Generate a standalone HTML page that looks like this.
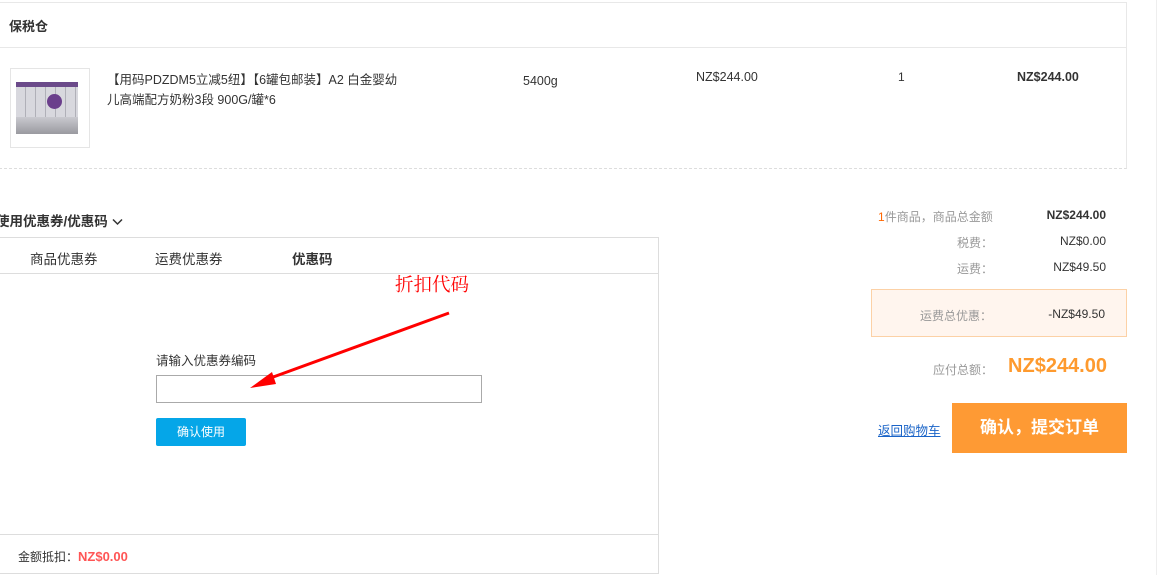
<!DOCTYPE html>
<html><head><meta charset="utf-8"><style>
*{margin:0;padding:0;box-sizing:border-box}
body{width:1158px;height:575px;background:#fff;position:relative;overflow:hidden;font-family:"Liberation Sans","Noto Sans CJK SC",sans-serif;color:#333;font-size:12px}
.a{position:absolute;white-space:nowrap}
</style></head><body>
<div class="a" style="left:-1px;top:2px;width:1128px;height:167px;border:1px solid #e8e8e8;border-bottom:1px dashed #ddd"></div>
<div class="a" style="left:0;top:47px;width:1126px;height:1px;background:#e8e8e8"></div>
<div class="a" style="left:1156px;top:0;width:1px;height:575px;background:#eee"></div>
<div class="a" style="left:9px;top:16px;font-size:13px;font-weight:bold;color:#333">保税仓</div>
<div class="a" style="left:10px;top:68px;width:80px;height:80px;border:1px solid #e5e5e5;background:#fff">
<div style="position:absolute;left:5px;top:13px;width:62px;height:52px;background:repeating-linear-gradient(90deg,#d8d8de 0 9px,#b0b0b8 9px 10px),#ddd"></div>
<div style="position:absolute;left:5px;top:13px;width:62px;height:5px;background:#6b4a8a"></div>
<div style="position:absolute;left:5px;top:48px;width:62px;height:17px;background:linear-gradient(#c9c9cf,#9a9aa0)"></div>
<div style="position:absolute;left:36px;top:25px;width:15px;height:15px;border-radius:50%;background:#6b3f8c"></div>
</div>
<div class="a" style="left:107px;top:70px;line-height:20px;font-size:12.5px">【用码PDZDM5立减5纽】【6罐包邮装】A2 白金婴幼<br>儿高端配方奶粉3段 900G/罐*6</div>
<div class="a" style="left:523px;top:74px;font-size:12.5px">5400g</div>
<div class="a" style="left:696px;top:70px;font-size:12.5px">NZ$244.00</div>
<div class="a" style="left:898px;top:70px">1</div>
<div class="a" style="left:1017px;top:70px;font-weight:bold;font-size:12.5px">NZ$244.00</div>

<div class="a" style="left:-4px;top:210px;font-size:13.5px;font-weight:bold">使用优惠券/优惠码 <svg width="11" height="8" viewBox="0 0 11 8"><path d="M1 1.5l4.5 4.5 4.5-4.5" fill="none" stroke="#333" stroke-width="1.5"/></svg></div>
<div class="a" style="left:-1px;top:237px;width:660px;height:337px;border:1px solid #ddd"></div>
<div class="a" style="left:0;top:273px;width:658px;height:1px;background:#ddd"></div>
<div class="a" style="left:0;top:534px;width:658px;height:1px;background:#ddd"></div>
<div class="a" style="left:30px;top:248px;font-size:13.5px">商品优惠券</div>
<div class="a" style="left:155px;top:248px;font-size:13.5px">运费优惠券</div>
<div class="a" style="left:292px;top:248px;font-size:13.5px;font-weight:bold">优惠码</div>
<div class="a" style="left:395px;top:271px;font-size:18.5px;color:#f00;font-family:'Liberation Serif','Noto Serif CJK SC',serif">折扣代码</div>
<div class="a" style="left:156px;top:350px;font-size:12.5px">请输入优惠券编码</div>
<div class="a" style="left:156px;top:375px;width:326px;height:28px;border:1px solid #aaa"></div>
<div class="a" style="left:156px;top:418px;width:90px;height:28px;background:#05a6e8;border-radius:2px;color:#fff;text-align:center;line-height:28px">确认使用</div>
<svg class="a" style="left:0;top:0" width="660" height="575"><line x1="449" y1="313" x2="265" y2="380" stroke="#f00" stroke-width="3"/><path d="M250 388l22-16 4 12z" fill="#f00"/></svg>
<div class="a" style="left:18px;top:548px">金额抵扣：<b style="color:#f55;font-size:13px">NZ$0.00</b></div>

<div class="a" style="left:878px;top:208px;color:#999"><span style="color:#f60">1</span>件商品，商品总金额</div>
<div class="a" style="right:52px;top:208px;font-weight:bold;color:#333">NZ$244.00</div>
<div class="a" style="left:957px;top:234px;color:#999">税费：</div>
<div class="a" style="right:52px;top:234px">NZ$0.00</div>
<div class="a" style="left:957px;top:260px;color:#999">运费：</div>
<div class="a" style="right:52px;top:260px">NZ$49.50</div>
<div class="a" style="left:871px;top:289px;width:256px;height:48px;background:#fff5ee;border:1px solid #fcd1a6"></div>
<div class="a" style="left:920px;top:307px;color:#999">运费总优惠：</div>
<div class="a" style="right:53px;top:307px">-NZ$49.50</div>
<div class="a" style="left:933px;top:361px;color:#999">应付总额：</div>
<div class="a" style="right:51px;top:355px;font-size:20px;font-weight:bold;color:#fe9a2e">NZ$244.00</div>
<div class="a" style="left:878px;top:420px;color:#1a64c8;text-decoration:underline;font-size:12.5px">返回购物车</div>
<div class="a" style="left:952px;top:403px;width:175px;height:50px;background:#fe9a34;color:#fff;font-size:17px;font-weight:bold;text-align:center;line-height:50px">确认，提交订单</div>
</body></html>
